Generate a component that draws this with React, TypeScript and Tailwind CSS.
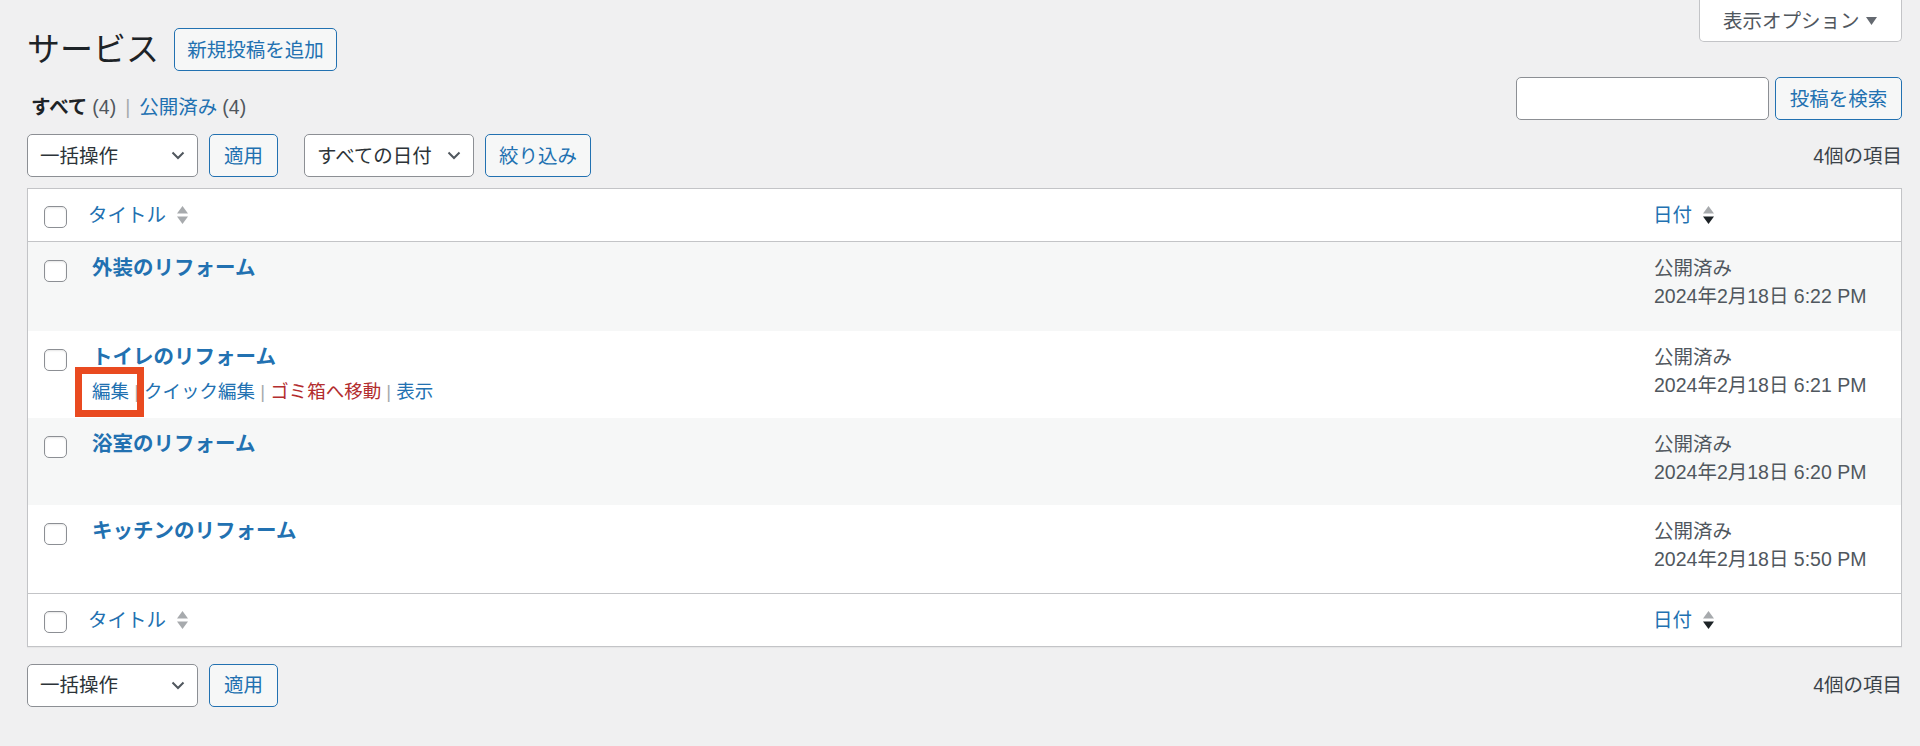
import React from 'react';

type Row = {
	title: string;
	date: string;
	striped: boolean;
	height: string;
	actions?: boolean;
};

const rows: Row[] = [
	{ title: '外装のリフォーム', date: '2024年2月18日 6:22 PM', striped: true, height: 'h-[89px]' },
	{ title: 'トイレのリフォーム', date: '2024年2月18日 6:21 PM', striped: false, height: 'h-[87px]', actions: true },
	{ title: '浴室のリフォーム', date: '2024年2月18日 6:20 PM', striped: true, height: 'h-[87px]' },
	{ title: 'キッチンのリフォーム', date: '2024年2月18日 5:50 PM', striped: false, height: 'h-[88px]' },
];

function Checkbox({ className = '' }: { className?: string }) {
	return (
		<span
			className={`block h-[22px] w-[23px] rounded-[5px] border border-[#8c8f94] bg-white shadow-[inset_0_1px_2px_rgba(0,0,0,0.1)] ${className}`}
		/>
	);
}

function SortArrows({ active = false }: { active?: boolean }) {
	return (
		<svg width="11" height="18" viewBox="0 0 11 18" className="ml-[11px] shrink-0">
			<polygon points="0,7.5 5.5,0 11,7.5" fill="#a7aaad" />
			<polygon points="0,10.5 11,10.5 5.5,18" fill={active ? '#1d2327' : '#a7aaad'} />
		</svg>
	);
}

function Chevron() {
	return (
		<svg width="14" height="9" viewBox="0 0 14 9" className="shrink-0">
			<path d="M1.5 1.5 L7 7 L12.5 1.5" fill="none" stroke="#50575e" strokeWidth="2" />
		</svg>
	);
}

function SelectBox({ label, width }: { label: string; width: string }) {
	return (
		<div
			className={`flex h-[43px] ${width} items-center justify-between rounded-[5px] border border-[#8c8f94] bg-white pl-[12px] pr-[12px] text-[#2c3338]`}
		>
			<span className="leading-[28px]">{label}</span>
			<Chevron />
		</div>
	);
}

function OutlineButton({ label, width, height = 'h-[43px]' }: { label: string; width: string; height?: string }) {
	return (
		<button
			type="button"
			className={`flex ${height} ${width} items-center justify-center rounded-[5px] border border-[#2271b1] bg-[#f6f7f7] text-[#2271b1] leading-[28px]`}
		>
			{label}
		</button>
	);
}

function HeadRow({ top }: { top: boolean }) {
	return (
		<div
			className={`grid h-[53px] grid-cols-[60px_1fr_249px] items-center ${
				top ? 'border-b border-[#c3c4c7]' : 'border-t border-[#c3c4c7]'
			}`}
		>
			<div className="pl-[16px]">
				<Checkbox className="mt-[4px]" />
			</div>
			<div className="flex items-center text-[#2271b1] leading-[28px]">
				<span>タイトル</span>
				<SortArrows />
			</div>
			<div className="flex items-center pl-[1px] text-[#2271b1] leading-[28px]">
				<span>日付</span>
				<SortArrows active />
			</div>
		</div>
	);
}

export default function App() {
	return (
		<div className="h-screen overflow-hidden bg-[#f0f0f1] pl-[27px] pr-[18px] font-['Liberation_Sans','Noto_Sans_CJK_JP',sans-serif] text-[19.5px] text-[#3c434a]">
			{/* title + screen options */}
			<div className="flex items-start justify-between">
				<div className="flex items-center gap-[15px] pt-[28px]">
					<h1 className="text-[33px] leading-[43px] font-normal text-[#1d2327]">サービス</h1>
					<OutlineButton label="新規投稿を追加" width="w-[163px]" />
				</div>
				<button
					type="button"
					className="flex h-[42px] w-[203px] items-center justify-between rounded-b-[5px] border-x border-b border-[#c3c4c7] bg-white pl-[23px] pr-[24px] text-[#50575e] leading-[28px]"
				>
					<span>表示オプション</span>
					<svg width="11" height="8" viewBox="0 0 11 8">
						<polygon points="0,0 11,0 5.5,8" fill="#646970" />
					</svg>
				</button>
			</div>

			{/* views + search */}
			<div className="mt-[6px] flex h-[43px] items-end justify-between">
				<div className="flex items-center pb-[3px] pl-[4px] leading-[20px]">
					<span className="font-semibold text-[#1d2327]">すべて</span>
					<span className="ml-[5px] text-[#50575e]">(4)</span>
					<span className="mx-[9px] text-[#a7aaad]">|</span>
					<span className="text-[#2271b1]">公開済み</span>
					<span className="ml-[5px] text-[#50575e]">(4)</span>
				</div>
				<div className="flex items-center gap-[6px]">
					<div className="h-[43px] w-[253px] rounded-[5px] border border-[#8c8f94] bg-white" />
					<OutlineButton label="投稿を検索" width="w-[127px]" />
				</div>
			</div>

			{/* top tablenav */}
			<div className="mt-[14px] flex h-[43px] items-center justify-between">
				<div className="flex items-center">
					<SelectBox label="一括操作" width="w-[171px]" />
					<div className="ml-[11px]">
						<OutlineButton label="適用" width="w-[69px]" />
					</div>
					<div className="ml-[26px]">
						<SelectBox label="すべての日付" width="w-[170px]" />
					</div>
					<div className="ml-[11px]">
						<OutlineButton label="絞り込み" width="w-[106px]" />
					</div>
				</div>
				<span className="leading-[20px] text-[#3c434a]">4個の項目</span>
			</div>

			{/* list table */}
			<div className="mt-[11px] border border-[#c3c4c7] bg-white shadow-[0_1px_1px_rgba(0,0,0,0.04)]">
				<HeadRow top />
				{rows.map((row) => (
					<div
						key={row.title}
						className={`grid ${row.height} grid-cols-[60px_1fr_249px] ${row.striped ? 'bg-[#f6f7f7]' : 'bg-white'}`}
					>
						<div className="pl-[16px] pt-[18px]">
							<Checkbox />
						</div>
						<div className="relative pl-[4px] pt-[12px]">
							<div className="text-[20.5px] font-semibold leading-[28px] text-[#2271b1]">{row.title}</div>
							{row.actions && (
								<>
									<div className="mt-[7px] text-[18.5px] leading-[28px] text-[#2271b1]">
										<span>編集</span>
										<span className="text-[#a7aaad]"> | </span>
										<span>クイック編集</span>
										<span className="text-[#a7aaad]"> | </span>
										<span className="text-[#b32d2e]">ゴミ箱へ移動</span>
										<span className="text-[#a7aaad]"> | </span>
										<span>表示</span>
									</div>
									<span className="pointer-events-none absolute left-[-13px] top-[36px] h-[50px] w-[69px] border-[7px] border-[#e94a20]" />
								</>
							)}
						</div>
						<div className="pl-[2px] pt-[12px] leading-[28px] text-[#50575e]">
							<div>公開済み</div>
							<div>{row.date}</div>
						</div>
					</div>
				))}
				<HeadRow top={false} />
			</div>

			{/* bottom tablenav */}
			<div className="mt-[16px] flex h-[44px] items-center justify-between">
				<div className="flex items-center">
					<SelectBox label="一括操作" width="w-[171px]" />
					<div className="ml-[11px]">
						<OutlineButton label="適用" width="w-[69px]" />
					</div>
				</div>
				<span className="leading-[20px] text-[#3c434a]">4個の項目</span>
			</div>
		</div>
	);
}
